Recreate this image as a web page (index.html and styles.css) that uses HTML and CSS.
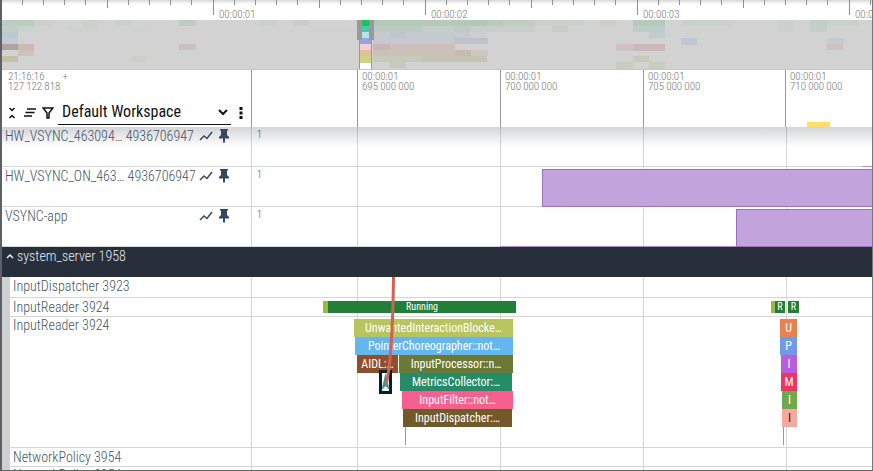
FILE: index.html
```
<!DOCTYPE html>
<html lang="en">
<head>
<meta charset="utf-8">
<title>Trace viewer</title>
<link rel="stylesheet" href="styles.css">
</head>
<body>
<svg class="defs" aria-hidden="true">
  <symbol id="chart" viewBox="0 0 14 10"><path d="M1 9l4-4 3 2.500 5-6.500" fill="none" stroke="currentColor" stroke-width="1.500"/></symbol>
  <symbol id="pin" viewBox="0 0 12 14"><path d="M2 0h8v1.500H9V6l2 2v1.500H7V13l-1 1-1-1V9.500H1V8l2-2V1.500H2z" fill="currentColor"/></symbol>
</svg>
<div class="app">
  <svg class="ruler" aria-hidden="true">
    <defs>
      <pattern id="ticks" x="1" width="212" height="20" patternUnits="userSpaceOnUse">
        <path d="M19.500 0v5M40.500 0v5M61.500 0v5M82.500 0v5M104.500 0v8M125.500 0v5M146.500 0v5M167.500 0v5M188.500 0v5M210.500 0v15" stroke="#8f8f8f"/>
      </pattern>
    </defs>
    <rect width="100%" height="20" fill="url(#ticks)"/>
    <g class="ruler-text"><text x="217" y="18">00:00:01</text><text x="429" y="18">00:00:02</text><text x="641" y="18">00:00:03</text><text x="853" y="18">00:00:04</text></g>
  </svg>
  <svg class="minimap" aria-hidden="true">
    <g fill="#bccdc2"><path d="M0 0h32v6H0z"/><path d="M32 0h16v6H32zM80 0h16v6H80zM113 0h16v6h-16z" opacity=".35"/><path d="M177 0h17v6h-17z"/><path d="M258 0h17v6h-17zM598 0h16v6h-16z" opacity=".35"/></g>
    <path d="M0 6h16v6H0z" fill="#bdd1ca"/><path d="M16 6h16v6H16z" fill="#c9d2ce"/><path d="M129 6h16v6h-16zM64 6h32v6H64z" fill="#cfd1d0"/>
    <path d="M0 12h16v6H0z" fill="#b9cbd0"/><path d="M0 18h16v6H0z" fill="#c4c9d5"/>
    <path d="M0 24h16v6H0z" fill="#aca3a3"/><path d="M16 24h16v6H16z" fill="#ceb8b8"/><path d="M177 24h17v6h-17z" fill="#cdbfc0"/>
    <path d="M16 30h16v6H16z" fill="#cdc3bd"/><path d="M0 36h16v6H0z" fill="#c0c2a6"/><path d="M129 36h16v6h-16z" fill="#cfcfc6"/>
    <g><path d="M291 0h16v6h-16z" fill="#c8cfca"/><path d="M307 6h16v6h-16zM323 6h32v6h-32z" fill="#ced1d0"/>
      <path d="M371 0h97v6h-97z" fill="#b5c9b9"/><path d="M468 0h33v6h-33z" fill="#b0c8b5"/><path d="M501 0h32v6h-32z" fill="#bccbc0"/><path d="M485 0h48v6h-48z" fill="#c8d0c9" opacity=".4"/><path d="M533 0h49v6h-49z" fill="#cbd0cc"/>
      <path d="M371 6h49v6h-49z" fill="#b9cac3"/><path d="M420 6h32v6h-32z" fill="#c5cecb"/><path d="M452 6h17v6h-17z" fill="#bccac5"/><path d="M469 6h64v6h-64z" fill="#c8cecc"/><path d="M550 6h16v6h-16z" fill="#c6cecc"/>
      <path d="M371 12h98v6h-98z" fill="#c5cacd"/><path d="M388 12h16v6h-16z" fill="#bdc8ca"/><path d="M469 12h16v6h-16z" fill="#cccecf"/>
      <path d="M371 18h82v6h-82z" fill="#c8c9d0"/><path d="M453 18h33v6h-33z" fill="#bec1ca"/>
      <path d="M371 24h82v6h-82z" fill="#cdbfbd"/><path d="M371 24h17v6h-17z" fill="#cbb5b6"/>
      <path d="M371 30h82v6h-82z" fill="#ccc0ba"/><path d="M453 30h16v6h-16z" fill="#c9baaf"/><path d="M469 30h17v6h-17z" fill="#cdc7c1"/>
      <path d="M371 36h49v6h-49z" fill="#c8cab9"/><path d="M420 36h65v6h-65z" fill="#c4c6b2"/><path d="M388 42h16v6h-16z" fill="#c4cbbb"/></g>
    <g><path d="M598 0h16v6h-16z" fill="#c8d0ca"/><path d="M631 0h32v6h-32z" fill="#b6cbb7"/><path d="M679 0h49v6h-49z" fill="#cad0cb"/><path d="M631 6h16v6h-16z" fill="#bdcec8"/><path d="M647 6h16v6h-16z" fill="#b9cecb"/><path d="M647 12h16v6h-16z" fill="#bfcdd0"/>
      <path d="M679 18h16v7h-16z" fill="#c2c6d1"/><path d="M614 24h17v7h-17z" fill="#cec2c2"/><path d="M631 24h32v7h-32z" fill="#ccb9b9"/><path d="M631 36h16v6h-16z" fill="#c8cab9"/><path d="M614 42h17v7h-17zM647 42h16v7h-16z" fill="#c5cdbf"/>
      <path d="M776 0h16v12h-16z" fill="#cbd1ce"/><path d="M808 0h17v12h-17z" fill="#c2cec8"/><path d="M825 0h32v6h-32z" fill="#cad1cc"/><path d="M825 18h17v6h-17z" fill="#c8cad2"/><path d="M825 24h16v6h-16z" fill="#cfc2c2"/></g>
    <path d="M358 0h11v50h-11z" fill="#fff"/>
    <path d="M358 0h11v6h-11z" fill="#20c05d"/><path d="M358 6h11v6h-11z" fill="#48c8a5"/><path d="M358 12h11v6h-11z" fill="#b8e0e8"/><path d="M358 18h11v6h-11z" fill="#94a7dc"/><path d="M358 24h11v6h-11z" fill="#f0d0d4"/><path d="M358 30h11v6h-11z" fill="#e3bd9e"/><path d="M358 36h11v7h-11z" fill="#ced582"/>
    <path d="M357.500 20v30M369.500 20v30" stroke="#999"/><path d="M355 0h5v20h-5zM367 0h5v20h-5z" fill="#999"/>
  </svg>
  <header class="top">
    <div class="top-shell">
      <div class="origin"><span>21:16:16</span><span class="plus">+</span><br>127&thinsp;122&thinsp;818</div>
      <div class="toolbar">
        <button type="button" aria-label="Collapse all"><svg width="8" height="12" viewBox="0 0 8 12"><path d="M1.500 1L4 3.500 6.500 1M1.500 11L4 8.500 6.500 11" fill="none" stroke="#111" stroke-width="1.500"/></svg></button>
        <button type="button" aria-label="Sort tracks"><svg width="12" height="9" viewBox="0 0 12 9"><path d="M3 1h9M1.500 4.500h9M0 8h8" stroke="#111" stroke-width="1.500"/></svg></button>
        <button type="button" aria-label="Filter tracks"><svg width="12" height="12" viewBox="0 0 12 12"><path d="M1.200 1h9.600L7 6v5H5V6z" fill="none" stroke="#111" stroke-width="1.500"/></svg></button>
        <span class="picker">
          <select aria-label="Workspace"><option>Default Workspace</option></select>
          <svg width="10" height="7" viewBox="0 0 10 7"><path d="M1 1l4 4 4-4" fill="none" stroke="#111" stroke-width="2"/></svg>
        </span>
        <button type="button" aria-label="Workspace menu"><svg width="4" height="12" viewBox="0 0 4 12"><path d="M.5 0h3v3h-3zM.5 4.500h3v3h-3zM.5 9h3v3h-3z" fill="#111"/></svg></button>
      </div>
    </div>
    <div class="axis">
      <div class="mark">00:00:01<br>695&thinsp;000&thinsp;000</div>
      <div class="mark">00:00:01<br>700&thinsp;000&thinsp;000</div>
      <div class="mark">00:00:01<br>705&thinsp;000&thinsp;000</div>
      <div class="mark">00:00:01<br>710&thinsp;000&thinsp;000</div>
      <i class="note"></i>
    </div>
  </header>
  <main class="tracks">
    <section class="track counter">
      <h2 class="shell"><span class="name">HW_VSYNC_463094… 4936706947</span><svg class="chart"><use href="#chart"/></svg><svg class="pin"><use href="#pin"/></svg></h2>
      <div class="lane"><span class="max">1</span><i class="low" style="--at:610px"></i></div>
    </section>
    <section class="track counter">
      <h2 class="shell"><span class="name">HW_VSYNC_ON_463… 4936706947</span><svg class="chart"><use href="#chart"/></svg><svg class="pin"><use href="#pin"/></svg></h2>
      <div class="lane"><span class="max">1</span><i class="high" style="--at:290px"></i></div>
    </section>
    <section class="track counter">
      <h2 class="shell"><span class="name">VSYNC-app</span><svg class="chart"><use href="#chart"/></svg><svg class="pin"><use href="#pin"/></svg></h2>
      <div class="lane"><span class="max">1</span><i class="low" style="--at:248px"></i><i class="high" style="--at:0px"></i></div>
    </section>
    <section class="process">
      <h2><svg width="8" height="6" viewBox="0 0 8 6"><path d="M1 5l3-3 3 3" fill="none" stroke="#e8edf0" stroke-width="1.500"/></svg>system_server 1958</h2>
    </section>
    <div class="children">
      <section class="track"><h3 class="shell">InputDispatcher 3923</h3><div class="lane"></div></section>
      <section class="track state">
        <h3 class="shell">InputReader 3924</h3>
        <div class="lane row">
          <span class="slice lime" style="--at:71px;--len:5px"></span><span class="slice green" style="--at:0px;--len:188px">Running</span>
          <span class="slice lime" style="--at:255px;--len:4px"></span><span class="slice green" style="--at:0px;--len:10px">R</span><span class="slice green" style="--at:3px;--len:11px">R</span>
        </div>
      </section>
      <section class="track calls">
        <h3 class="shell">InputReader 3924</h3>
        <div class="lane">
          <div class="row"><span class="slice olive-light" style="--at:102px;--len:159px">UnwantedInteractionBlocke…</span><span class="slice orange" style="--at:267px;--len:17px">U</span></div>
          <div class="row"><span class="slice sky" style="--at:103px;--len:158px">PointerChoreographer::not…</span><span class="slice blue" style="--at:267px;--len:17px">P</span></div>
          <div class="row"><span class="slice brown" style="--at:105px;--len:41px">AIDL:…</span><span class="slice olive" style="--at:1px;--len:114px">InputProcessor::n…</span><span class="slice purple" style="--at:268px;--len:16px">I</span></div>
          <div class="row"><span class="slice teal" style="--at:148px;--len:112px">MetricsCollector:…</span><span class="slice red" style="--at:269px;--len:16px">M</span></div>
          <div class="row"><span class="slice pink" style="--at:150px;--len:111px">InputFilter::not…</span><span class="slice leaf" style="--at:269px;--len:15px">I</span></div>
          <div class="row"><span class="slice umber" style="--at:151px;--len:109px">InputDispatcher:…</span><span class="slice salmon" style="--at:270px;--len:15px">I</span></div>
          <div class="row"><span class="slice thin" style="--at:153px;--len:1px"></span><span class="slice thin" style="--at:377px;--len:1px"></span></div>
          <svg class="flow" width="24" height="120" viewBox="0 0 24 120" aria-hidden="true">
            <path d="M6.500 94.500h10v21h-10z" fill="#fff" stroke="#071f26" stroke-width="3"/>
            <path d="M11.500 96l4 17-4-4-4 4z" fill="#2a9aa0"/>
            <path d="M19.500 0C19 42 18 84 12 108" fill="none" stroke="#cf6254" stroke-width="3"/>
          </svg>
        </div>
      </section>
      <section class="track"><h3 class="shell">NetworkPolicy 3954</h3><div class="lane"></div></section>
      <section class="track"><h3 class="shell">NetworkPolicy 3954</h3><div class="lane"></div></section>
    </div>
  </main>
</div>
</body>
</html>
```
FILE: styles.css
```
* { box-sizing: border-box; }
body { margin: 0; font-family: "Roboto Condensed", Roboto, sans-serif; background: #fff; }
h2, h3 { margin: 0; font-weight: 300; }
.defs { position: absolute; width: 0; height: 0; }
.app {
  --grid: #d5d5d5;
  display: flex; flex-direction: column; height: 100vh; overflow: hidden;
  border-left: 2px solid #5d606b; border-right: 1px solid #777; border-bottom: 1px solid #666;
}
.ruler { flex: none; width: 100%; height: 20px; background: linear-gradient(#d6d6d6, #fff 4px); }
.ruler-text { font-size: 11px; font-weight: 300; fill: #777; }
.minimap { flex: none; width: 100%; height: 50px; background: #d2d2d2; border-bottom: 1px solid #c6c6c6; }

.top { flex: none; display: grid; grid-template-columns: 250px 1fr; height: 57px; font-size: 11px; line-height: 10px; font-weight: 300; color: #777; }
.top-shell { display: flex; flex-direction: column; justify-content: space-between; border-right: 1px solid #999; }
.origin { padding: 2px 6px 0; }
.plus { margin-left: 18px; }
.toolbar { display: flex; align-items: center; height: 29px; padding: 0 6px 0 4px; gap: 6px; }
.toolbar button { display: flex; align-items: center; justify-content: center; flex: none; width: 12px; height: 20px; border: 0; padding: 0; background: none; }
.toolbar button:last-child { width: 8px; }
.picker { display: flex; align-items: center; flex: 1; height: 24px; padding-right: 3px; margin-left: -2px; border-bottom: 1px solid #15151f; }
.picker select { flex: 1; min-width: 0; appearance: none; border: 0; padding: 0 4px; background: none; font: 400 16px/22px "Roboto Condensed", Roboto, sans-serif; color: #111; }
.axis { position: relative; display: flex; padding-left: 105px; overflow: hidden; }
.mark { flex: none; width: 143px; padding: 2px 4px 0; border-left: 1px solid #999; }
.mark:nth-child(3) { width: 142px; }
.note { position: absolute; left: 555px; bottom: 0; width: 23px; height: 5px; background: #ffdf6b; }

.tracks {
  position: relative; flex: 1; min-height: 0; overflow: hidden;
  background: repeating-linear-gradient(90deg, var(--grid) 0 1px, transparent 1px 143px) 355px 0 / 100% 100% no-repeat;
}
.tracks::before { content: ""; position: absolute; top: 0; left: 0; right: 0; height: 20px; background: linear-gradient(rgba(60, 64, 75, .22), transparent); pointer-events: none; }
.track { display: grid; grid-template-columns: 250px 1fr; height: 19px; border-bottom: 1px solid var(--grid); }
.shell { display: flex; padding: 0 21px 0 3px; border-right: 1px solid var(--grid); font-size: 14px; line-height: 18px; color: #445566; }
.counter { height: 40px; }
.name { flex: 1; min-width: 0; white-space: nowrap; }
.chart { flex: none; width: 14px; height: 10px; margin: 4px 5px 0 0; color: #3b4a59; }
.pin { flex: none; width: 12px; height: 14px; margin-top: 2px; color: #34495e; }
.lane { position: relative; display: flex; min-width: 0; }
.counter .lane { margin-bottom: -1px; }
.max { position: absolute; left: 5px; top: 1px; font-size: 10px; line-height: 14px; font-weight: 300; color: #444; }
.high { flex: 1; margin: 2px 0 0 var(--at); background: #c2a3dc; border: 1px solid #9b70be; border-right: 0; }
.low { flex: 1; margin-left: var(--at); border-bottom: 1px solid #b08cca; }
.low:has(+ .high) { flex: none; width: 236px; }

.process { position: relative; height: 30px; background: #262f3a; color: #e8edf0; }
.process h2 { display: flex; align-items: baseline; gap: 3px; padding-left: 4px; font-size: 14px; line-height: 18px; }
.process svg { align-self: center; }
.children { border-left: 8px solid #d0d0d0; }
.children .track { grid-template-columns: 242px 1fr; }
.children .track:first-child { height: 21px; }
.children .calls { height: 131px; }
.calls .shell, .children .track:last-child .shell { line-height: 16px; }
.calls .lane { flex-direction: column; padding-top: 2px; }
.row { display: flex; }
.slice { flex: none; width: var(--len); height: 18px; margin-left: var(--at); overflow: hidden; white-space: nowrap; text-align: center; font-size: 12px; line-height: 18px; color: #fff; }
.state .slice { height: 12px; margin-top: 3px; font-size: 10px; line-height: 12px; }
.lime { background: #98bb45; }
.green { background: #237f38; }
.olive-light { background: #b7c45f; }
.sky { background: #63b6ee; }
.brown { background: #8f4f2b; }
.olive { background: #6c7836; }
.teal { background: #268c68; }
.pink { background: #f75f8e; }
.umber { background: #72592a; }
.orange { background: #e9824e; }
.blue { background: #7199e8; }
.purple { background: #b75de0; }
.red { background: #ee3465; }
.leaf { background: #71a84b; }
.salmon { background: #f8a8a0; color: #222; }
.slice.thin { background: #5fb5a3; }
.flow { position: absolute; left: 122px; top: -40px; }
```
